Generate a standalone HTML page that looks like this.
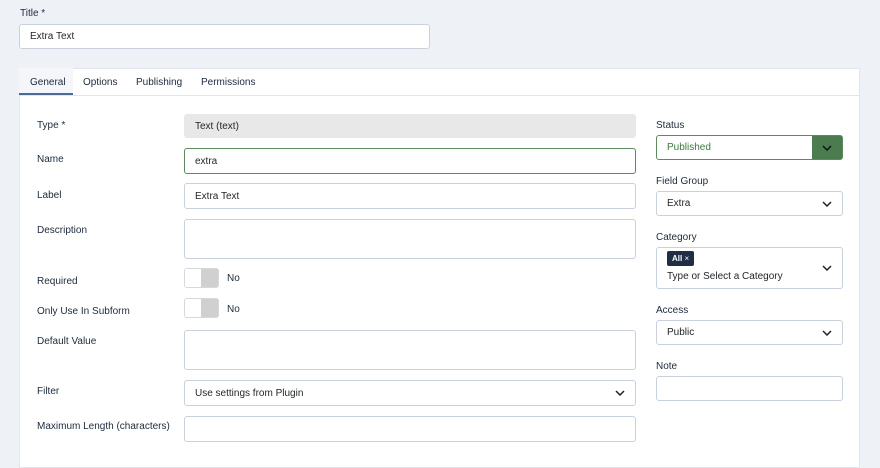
<!DOCTYPE html>
<html><head><style>
*{box-sizing:border-box;margin:0;padding:0}
body{width:880px;height:458px;background:#eef2f7;font-family:"Liberation Sans",sans-serif;font-size:10px;color:#22262a;position:relative;overflow:hidden}
.a{position:absolute}
.lbl{position:absolute;color:#1c2a3c;font-size:10px;margin-top:1px}
.in{position:absolute;background:#fff;border:1px solid #c9d1dc;border-radius:3px;padding-left:10px;display:flex;align-items:center;font-size:10px}
.sel .ch{position:absolute;right:0;top:0;bottom:0;width:30px;display:flex;align-items:center;justify-content:center}
.tog{position:absolute;width:35px;height:20px;border:1px solid #d5d9de;border-radius:3px;background:#fff}
.tog::after{content:"";position:absolute;right:0;top:0;width:17px;height:18px;background:#d0d0d0}
</style></head><body>
<div class="lbl" style="left:20px;top:7px">Title *</div>
<div class="in" style="left:19px;top:24px;width:411px;height:25px">Extra Text</div>
<div class="a" style="left:19px;top:68px;width:841px;height:400px;background:#fff;border:1px solid #e2e6ec"></div>
<div class="a" style="left:19px;top:95px;width:841px;height:1px;background:#e2e6ec"></div>
<div class="a" style="left:19px;top:68px;width:54px;height:27px;background:#f4f6f9;border-bottom:2px solid #4a6a9a"></div>
<div class="lbl" style="left:30px;top:76px;color:#1c2a3c">General</div>
<div class="lbl" style="left:83px;top:76px">Options</div>
<div class="lbl" style="left:136px;top:76px">Publishing</div>
<div class="lbl" style="left:201px;top:76px">Permissions</div>

<div class="lbl" style="left:37px;top:119px">Type *</div>
<div class="in" style="left:184px;top:114px;width:452px;height:24px;background:#e8e8e8;border-color:#e8e8e8">Text (text)</div>
<div class="lbl" style="left:37px;top:153px">Name</div>
<div class="in" style="left:184px;top:148px;width:452px;height:26px;border-color:#5c8a5c">extra</div>
<div class="lbl" style="left:37px;top:189px">Label</div>
<div class="in" style="left:184px;top:183px;width:452px;height:26px">Extra Text</div>
<div class="lbl" style="left:37px;top:224px">Description</div>
<div class="in" style="left:184px;top:219px;width:452px;height:40px"></div>
<div class="lbl" style="left:37px;top:275px">Required</div>
<div class="tog" style="left:184px;top:268px"></div>
<div class="lbl" style="left:227px;top:272px">No</div>
<div class="lbl" style="left:37px;top:305px">Only Use In Subform</div>
<div class="tog" style="left:184px;top:298px"></div>
<div class="lbl" style="left:227px;top:303px">No</div>
<div class="lbl" style="left:37px;top:335px">Default Value</div>
<div class="in" style="left:184px;top:330px;width:452px;height:40px"></div>
<div class="lbl" style="left:37px;top:385px">Filter</div>
<div class="in sel" style="left:184px;top:380px;width:452px;height:26px">Use settings from Plugin<span class="ch"><svg width="10" height="6"><path d="M1 1l4 4 4-4" fill="none" stroke="#222" stroke-width="1.5"/></svg></span></div>
<div class="lbl" style="left:37px;top:420px">Maximum Length (characters)</div>
<div class="in" style="left:184px;top:416px;width:452px;height:26px"></div>

<div class="lbl" style="left:656px;top:119px">Status</div>
<div class="in sel" style="left:656px;top:135px;width:187px;height:25px;border-color:#5c8a5c;color:#3d7a3d">Published<span class="ch" style="background:#4a7c50"><svg width="10" height="6"><path d="M1 1l4 4 4-4" fill="none" stroke="#111" stroke-width="1.5"/></svg></span></div>
<div class="lbl" style="left:656px;top:175px">Field Group</div>
<div class="in sel" style="left:656px;top:191px;width:187px;height:25px">Extra<span class="ch"><svg width="10" height="6"><path d="M1 1l4 4 4-4" fill="none" stroke="#222" stroke-width="1.5"/></svg></span></div>
<div class="lbl" style="left:656px;top:231px">Category</div>
<div class="in sel" style="left:656px;top:247px;width:187px;height:42px;display:block;padding-top:3px">
<span style="display:inline-block;background:#1f2d45;color:#fff;font-size:8px;padding:3px 5px;border-radius:2px;font-weight:bold">All <span style="font-weight:normal">×</span></span>
<div style="margin-top:5px;font-size:10px">Type or Select a Category</div><span class="ch"><svg width="10" height="6"><path d="M1 1l4 4 4-4" fill="none" stroke="#222" stroke-width="1.5"/></svg></span></div>
<div class="lbl" style="left:656px;top:304px">Access</div>
<div class="in sel" style="left:656px;top:320px;width:187px;height:25px">Public<span class="ch"><svg width="10" height="6"><path d="M1 1l4 4 4-4" fill="none" stroke="#222" stroke-width="1.5"/></svg></span></div>
<div class="lbl" style="left:656px;top:360px">Note</div>
<div class="in" style="left:656px;top:376px;width:187px;height:25px"></div>
</body></html>
